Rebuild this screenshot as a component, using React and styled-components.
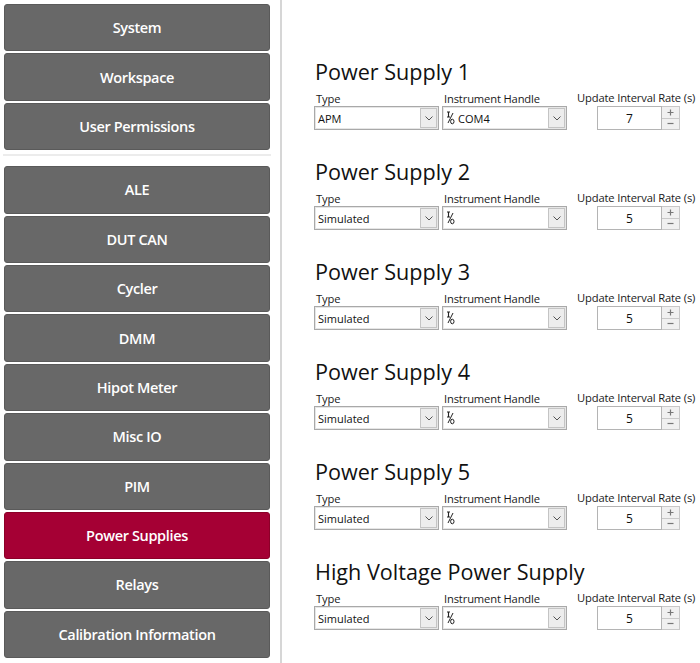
import React from 'react';
import styled, { createGlobalStyle } from 'styled-components';

const GlobalStyle = createGlobalStyle`
  html, body {
    margin: 0;
    padding: 0;
    background: #ffffff;
    font-family: "Open Sans", "Noto Sans", sans-serif;
  }
`;

const Page = styled.div`
  display: flex;
  width: 700px;
  height: 663px;
  overflow: hidden;
`;

const Sidebar = styled.nav`
  width: 282px;
  flex: none;
  padding: 4px 0 0 4px;
  box-sizing: border-box;
  display: flex;
  flex-direction: column;
  border-right: 2px solid #d6d6d6;
`;

const NavGroup = styled.div`
  display: flex;
  flex-direction: column;
  gap: 2px;
`;

const Separator = styled.div`
  width: 268px;
  height: 2px;
  margin: 4px 0 10px -1px;
  background: #ececec;
`;

const NavButton = styled.button`
  width: 266px;
  height: 47.4px;
  border: 1px solid ${p => (p.$active ? '#8c0028' : '#5a5a5a')};
  border-radius: 3px;
  background: ${p => (p.$active ? '#a50034' : '#686868')};
  color: #ffffff;
  font-family: "Open Sans", "Noto Sans", sans-serif;
  font-weight: 600;
  font-size: 14.5px;
  letter-spacing: -0.35px;
  padding: 0;
  cursor: pointer;
`;

const Content = styled.main`
  flex: 1;
  padding: 56px 0 0 32px;
  display: flex;
  flex-direction: column;
`;

const Section = styled.section`
  height: 100px;
  display: flex;
  flex-direction: column;
`;

const Heading = styled.h2`
  margin: 0;
  height: 34px;
  line-height: 32px;
  font-size: 21.6px;
  font-weight: 400;
  color: #111111;
  padding-left: 1px;
  font-family: "Open Sans", "Noto Sans", sans-serif;
`;

const FieldRow = styled.div`
  display: flex;
  align-items: flex-end;
  gap: 3px;
`;

const Field = styled.div`
  display: flex;
  flex-direction: column;
  align-items: flex-start;
  margin-left: ${p => p.$offset || 0}px;
`;

const Label = styled.span`
  font-size: 11.2px;
  letter-spacing: -0.15px;
  line-height: 15px;
  color: #1a1a1a;
  padding-left: 2px;
  white-space: nowrap;
`;

const Combo = styled.div`
  width: 123px;
  height: 22px;
  border: 1px solid #a9a9a9;
  background: #ffffff;
  display: flex;
  align-items: stretch;
  box-shadow: inset 0 0 0 1px #e6e6e6;
`;

const ComboText = styled.div`
  flex: 1;
  display: flex;
  align-items: center;
  gap: 3px;
  padding-left: 3px;
  font-size: 11px;
  color: #111111;
`;

const ComboArrow = styled.div`
  width: 15px;
  margin: 1px;
  border: 1px solid #c4c4c4;
  background: #ededed;
  display: flex;
  align-items: center;
  justify-content: center;
`;

const Numeric = styled.div`
  display: flex;
  height: 24px;
  margin: 1px 0 0 22px;
`;

const NumBox = styled.div`
  width: 63px;
  border: 1px solid #b4b4b4;
  background: #ffffff;
  display: flex;
  align-items: center;
  justify-content: center;
  font-size: 12px;
  color: #111111;
`;

const Spinner = styled.div`
  width: 17px;
  display: flex;
  flex-direction: column;
  border: 1px solid #c8c8c8;
  border-left: none;
`;

const SpinButton = styled.div`
  flex: 1;
  background: #f0f0f0;
  border-bottom: ${p => (p.$top ? '1px solid #c8c8c8' : 'none')};
  display: flex;
  align-items: center;
  justify-content: center;
`;

const Chevron = () => (
  <svg width="8" height="5" viewBox="0 0 8 5">
    <path d="M0.5 0.5 L4 4 L7.5 0.5" fill="none" stroke="#555" strokeWidth="1" />
  </svg>
);

const PlusIcon = () => (
  <svg width="7" height="7" viewBox="0 0 7 7">
    <path d="M0.5 3.5 H6.5 M3.5 0.5 V6.5" fill="none" stroke="#777" strokeWidth="1.2" />
  </svg>
);

const MinusIcon = () => (
  <svg width="7" height="3" viewBox="0 0 7 3">
    <path d="M0.5 1.5 H6.5" fill="none" stroke="#777" strokeWidth="1.2" />
  </svg>
);

const IoIcon = () => (
  <svg width="9" height="14" viewBox="0 0 9 14">
    <path d="M1 1 H4 M2.5 1 V6 M1 6 H4" fill="none" stroke="#222" strokeWidth="1.1" />
    <path d="M7 2 L2 12" fill="none" stroke="#222" strokeWidth="1" />
    <ellipse cx="6.3" cy="10.5" rx="1.7" ry="2.3" fill="none" stroke="#222" strokeWidth="1" />
  </svg>
);

const topNav = ['System', 'Workspace', 'User Permissions'];
const mainNav = [
  'ALE',
  'DUT CAN',
  'Cycler',
  'DMM',
  'Hipot Meter',
  'Misc IO',
  'PIM',
  'Power Supplies',
  'Relays',
  'Calibration Information',
];

const supplies = [
  { title: 'Power Supply 1', type: 'APM', handle: 'COM4', rate: 7 },
  { title: 'Power Supply 2', type: 'Simulated', handle: '', rate: 5 },
  { title: 'Power Supply 3', type: 'Simulated', handle: '', rate: 5 },
  { title: 'Power Supply 4', type: 'Simulated', handle: '', rate: 5 },
  { title: 'Power Supply 5', type: 'Simulated', handle: '', rate: 5 },
  { title: 'High Voltage Power Supply', type: 'Simulated', handle: '', rate: 5 },
];

const App = () => {
  return (
    <Page>
      <GlobalStyle />
      <Sidebar>
        <NavGroup>
          {topNav.map(n => (
            <NavButton key={n}>{n}</NavButton>
          ))}
        </NavGroup>
        <Separator />
        <NavGroup>
          {mainNav.map(n => (
            <NavButton key={n} $active={n === 'Power Supplies'}>{n}</NavButton>
          ))}
        </NavGroup>
      </Sidebar>
      <Content>
        {supplies.map(s => (
          <Section key={s.title}>
            <Heading>{s.title}</Heading>
            <FieldRow>
              <Field>
                <Label>Type</Label>
                <Combo>
                  <ComboText>{s.type}</ComboText>
                  <ComboArrow><Chevron /></ComboArrow>
                </Combo>
              </Field>
              <Field>
                <Label>Instrument Handle</Label>
                <Combo>
                  <ComboText><IoIcon />{s.handle}</ComboText>
                  <ComboArrow><Chevron /></ComboArrow>
                </Combo>
              </Field>
              <Field $offset={5}>
                <Label>Update Interval Rate (s)</Label>
                <Numeric>
                  <NumBox>{s.rate}</NumBox>
                  <Spinner>
                    <SpinButton $top><PlusIcon /></SpinButton>
                    <SpinButton><MinusIcon /></SpinButton>
                  </Spinner>
                </Numeric>
              </Field>
            </FieldRow>
          </Section>
        ))}
      </Content>
    </Page>
  );
};

export default App;
